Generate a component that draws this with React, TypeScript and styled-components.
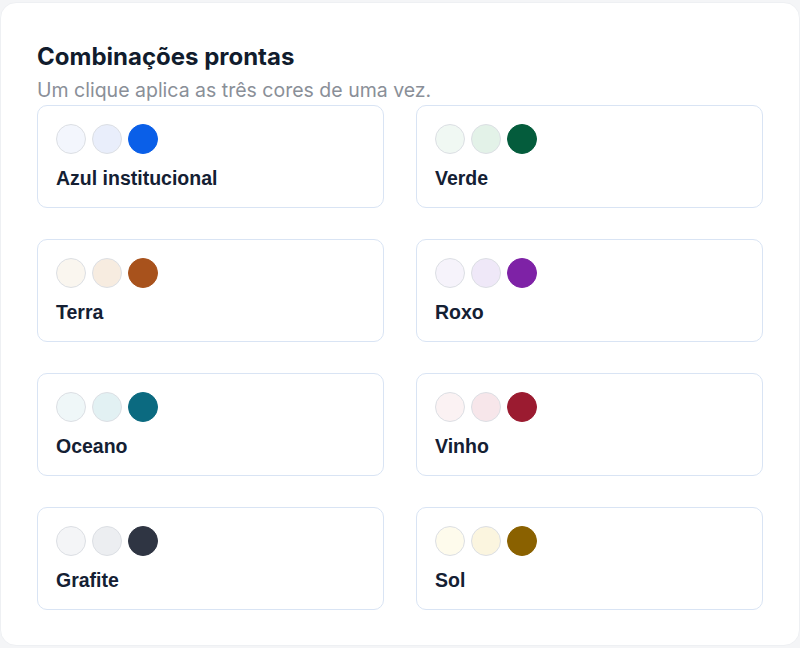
import React from "react";
import styled, { createGlobalStyle } from "styled-components";

const GlobalStyle = createGlobalStyle`
  html, body {
    margin: 0;
    padding: 0;
    background: #f4f5f7;
  }
  * {
    box-sizing: border-box;
  }
`;

const Page = styled.div`
  padding: 2px 0;
`;

const Panel = styled.section`
  background: #ffffff;
  border: 1px solid #eef0f3;
  border-radius: 16px;
  padding: 39px 36px 35px 36px;
`;

const Title = styled.h2`
  margin: 0;
  font-family: Inter, "Noto Sans", sans-serif;
  font-size: 24px;
  line-height: 29px;
  font-weight: 700;
  color: #111c2d;
`;

const Subtitle = styled.p`
  margin: 8px 0 3px 0;
  font-family: Inter, "Noto Sans", sans-serif;
  font-size: 19.5px;
  line-height: 23px;
  color: #8a8f98;
`;

const Grid = styled.div`
  display: grid;
  grid-template-columns: 1fr 1fr;
  column-gap: 32px;
  row-gap: 31px;
`;

const PresetCard = styled.button`
  display: flex;
  flex-direction: column;
  align-items: flex-start;
  height: 103px;
  padding: 18px;
  background: #ffffff;
  border: 1px solid #d9e4f4;
  border-radius: 10px;
  cursor: pointer;
  text-align: left;
`;

const Swatches = styled.div`
  display: flex;
  gap: 6px;
`;

const Swatch = styled.span<{ color: string; strong?: boolean }>`
  display: block;
  width: 30px;
  height: 30px;
  border-radius: 50%;
  background: ${(props) => props.color};
  border: 1px solid ${(props) => (props.strong ? props.color : "#dcdfe4")};
`;

const Label = styled.span`
  margin-top: 13px;
  font-family: "Liberation Sans", Arial, sans-serif;
  font-size: 19.5px;
  line-height: 22px;
  font-weight: 700;
  color: #142033;
`;

const presets = [
  { name: "Azul institucional", colors: ["#f3f6fd", "#e9eefb", "#0a5fe8"] },
  { name: "Verde", colors: ["#f0f8f3", "#e3f2e8", "#045c3c"] },
  { name: "Terra", colors: ["#faf6ef", "#f7ece0", "#a8521c"] },
  { name: "Roxo", colors: ["#f6f3fb", "#efe8f8", "#7e22a6"] },
  { name: "Oceano", colors: ["#eff7f8", "#e2f1f3", "#0b6a80"] },
  { name: "Vinho", colors: ["#fbf2f3", "#f7e6ea", "#9b1b30"] },
  { name: "Grafite", colors: ["#f4f5f7", "#eceef1", "#2f3543"] },
  { name: "Sol", colors: ["#fefbec", "#fbf5df", "#8a6100"] },
];

export default function App() {
  return (
    <Page>
      <GlobalStyle />
      <Panel>
        <Title>Combinações prontas</Title>
        <Subtitle>Um clique aplica as três cores de uma vez.</Subtitle>
        <Grid>
          {presets.map((preset) => (
            <PresetCard key={preset.name} type="button">
              <Swatches>
                {preset.colors.map((c, i) => (
                  <Swatch key={c} color={c} strong={i === 2} />
                ))}
              </Swatches>
              <Label>{preset.name}</Label>
            </PresetCard>
          ))}
        </Grid>
      </Panel>
    </Page>
  );
}
